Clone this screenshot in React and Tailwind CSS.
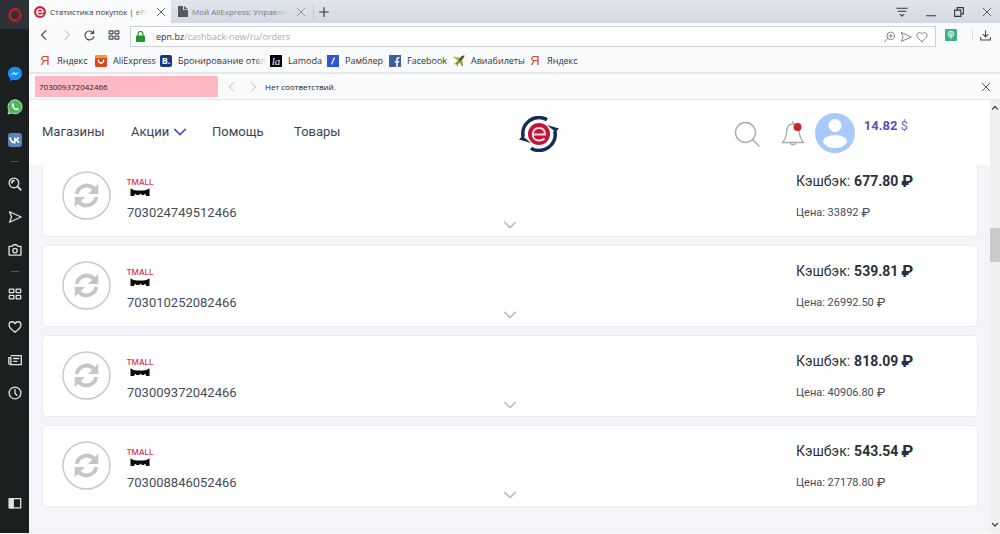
import React from "react";

const orders = [
  { id: "703024749512466", cashback: "677.80", price: "33892" },
  { id: "703010252082466", cashback: "539.81", price: "26992.50" },
  { id: "703009372042466", cashback: "818.09", price: "40906.80" },
  { id: "703008846052466", cashback: "543.54", price: "27178.80" },
];

function Icon({ className, children, box = "0 0 16 16", width = 1.2 }) {
  return (
    <svg
      viewBox={box}
      className={className}
      fill="none"
      stroke="currentColor"
      strokeWidth={width}
      strokeLinecap="round"
      strokeLinejoin="round"
      aria-hidden="true"
    >
      {children}
    </svg>
  );
}

const CloseGlyph = ({ className }) => (
  <Icon className={className}>
    <path d="M2 2 14 14M14 2 2 14" />
  </Icon>
);

const GridGlyph = ({ className }) => (
  <Icon className={className} width={1.5}>
    <rect x="1.5" y="2.5" width="5.2" height="4" rx=".5" />
    <rect x="9.3" y="2.5" width="5.2" height="4" rx=".5" />
    <rect x="1.5" y="9.5" width="5.2" height="4" rx=".5" />
    <rect x="9.3" y="9.5" width="5.2" height="4" rx=".5" />
  </Icon>
);

const HeartGlyph = ({ className, width }) => (
  <Icon className={className} width={width}>
    <path d="M8 14C5 11.500 1.200 9 1.200 5.600 1.200 3.400 2.800 2 4.700 2 6.200 2 7.400 2.900 8 4.200 8.600 2.900 9.800 2 11.300 2c1.900 0 3.500 1.400 3.500 3.600C14.800 9 11 11.500 8 14Z" />
  </Icon>
);

const SendGlyph = ({ className, width }) => (
  <Icon className={className} width={width}>
    <path d="M1.800 2 15 8 1.800 14 4 8Z" />
  </Icon>
);

const YandexGlyph = () => (
  <span className="w-3 text-center font-['Liberation_Sans'] text-[13px] leading-3 text-[#e0452f]" aria-hidden="true">
    Я
  </span>
);

function EpnBadge({ className }) {
  return (
    <svg viewBox="0 0 12 12" className={className} aria-hidden="true">
      <circle cx="6" cy="6" r="6" fill="#cf2440" />
      <path d="M2.500 6.200H9C9 4 7.800 2.800 6 2.800S2.800 4.200 2.800 6.100 4.200 9.300 6.200 9.300c1.200 0 2-.4 2.600-1" fill="none" stroke="#fff" strokeWidth="1.300" />
    </svg>
  );
}

function SideButton({ label, className, children }) {
  return (
    <button type="button" aria-label={label} className={`flex w-full shrink-0 items-center justify-center ${className}`}>
      {children}
    </button>
  );
}

function Sidebar() {
  return (
    <aside className="flex w-[29px] shrink-0 flex-col bg-[#1b1f1f] text-[#e1e3e3]">
      <SideButton label="Opera" className="h-[29px] bg-[#2c3236]">
        <svg viewBox="0 0 14 14" className="size-3.5" aria-hidden="true">
          <ellipse cx="7" cy="7" rx="5.300" ry="5.700" fill="none" stroke="#c8202f" strokeWidth="2.400" />
          <path d="M8 1.500c5 .5 6 10 0 11 2-1.500 2.600-3.500 2.600-5.500S10 3 8 1.500Z" fill="#8c1422" />
        </svg>
      </SideButton>
      <div className="h-7 shrink-0" />
      <SideButton label="Messenger" className="h-[33px]">
        <svg viewBox="0 0 16 16" className="size-4" aria-hidden="true">
          <path d="M8 .8C3.900.8 1 3.700 1 7.400c0 2 .8 3.700 2.200 4.900v2.900l2.500-1.400c.7.200 1.500.3 2.300.3 4.100 0 7-2.900 7-6.700S12.100.8 8 .8Z" fill="#1690f5" />
          <path d="m3.800 9.200 3-3.200 1.800 1.600 3.400-1.900-3.200 3.500L7 7.700Z" fill="#fff" />
        </svg>
      </SideButton>
      <SideButton label="WhatsApp" className="h-[33px]">
        <svg viewBox="0 0 16 16" className="size-4" aria-hidden="true">
          <path d="M1 15 2 11.300A7 7 0 1 1 4.800 14Z" fill="#4bb858" stroke="#e3f5e4" strokeWidth=".8" />
          <path d="M5.700 4.200c-1.200.6-1.300 2-.5 3.500.9 1.700 2.300 2.900 4 3.500 1.400.5 2.600-.5 2.500-1.600L10 8.700l-.9 1c-1.200-.5-2.100-1.400-2.700-2.600l.8-.9-.7-1.900Z" fill="#fff" />
        </svg>
      </SideButton>
      <SideButton label="ВКонтакте" className="h-[33px]">
        <svg viewBox="0 0 14 14" className="size-3.5" aria-hidden="true">
          <rect width="14" height="14" rx="3" fill="#5a84b5" />
          <path d="M2 4.500c.6 3.400 2.200 5.200 4.800 5.200V4.500M7 7c1.600-.2 2.800-1 3.600-2.500M7.300 7c1.800.2 3 1.200 3.900 2.700" fill="none" stroke="#fff" strokeWidth="1.600" />
        </svg>
      </SideButton>
      <div className="mx-auto my-[5px] h-px w-2 shrink-0 bg-[#50575a]" />
      <SideButton label="Поиск" className="h-[33px]">
        <Icon className="size-3.5" width={1.5}>
          <circle cx="6.800" cy="6.800" r="5.500" />
          <path d="m11 11 3.600 3.600M4.500 6.500A2.300 2.300 0 0 1 6.800 4.200" strokeWidth="2" />
        </Icon>
      </SideButton>
      <SideButton label="Отправить" className="h-[33px]">
        <SendGlyph className="size-3.5" width={1.5} />
      </SideButton>
      <SideButton label="Снимок" className="h-[33px]">
        <Icon className="size-3.5" width={1.5}>
          <path d="M1.200 3.800h3.600L6 2h4l1.200 1.800h3.600v10H1.200Z" />
          <circle cx="8" cy="8.700" r="2.500" />
        </Icon>
      </SideButton>
      <div className="mx-auto my-[5px] h-px w-2 shrink-0 bg-[#50575a]" />
      <SideButton label="Экспресс-панель" className="h-[33px]">
        <GridGlyph className="size-3.5" />
      </SideButton>
      <SideButton label="Закладки" className="h-[33px]">
        <HeartGlyph className="size-3.5" width={1.5} />
      </SideButton>
      <SideButton label="Новости" className="h-[33px]">
        <Icon className="size-3.5" width={1.5}>
          <path d="M3.500 3h11.700v10.300H2.300L.9 12V5.300h2.400V13M6.300 6.300h6M6.300 9.500h4" />
        </Icon>
      </SideButton>
      <SideButton label="История" className="h-[33px]">
        <Icon className="size-3.5" width={1.5}>
          <circle cx="8" cy="8" r="6.700" />
          <path d="M8 4v4.300l2.300 2.300" />
        </Icon>
      </SideButton>
      <SideButton label="Боковая панель" className="mt-auto mb-[14px] h-[33px]">
        <Icon className="size-3.5" width={1.5}>
          <rect x="1.500" y="3" width="13" height="10.500" />
          <path d="M1.500 3H6v10.500H1.500Z" fill="currentColor" />
        </Icon>
      </SideButton>
    </aside>
  );
}

function TabBar() {
  return (
    <div className="flex h-[23px] items-stretch bg-linear-to-b from-[#e1e5ee] to-[#d3d8e2] text-[8px] text-[#333]">
      <div className="flex w-[142px] items-center gap-1 bg-[#fafbfd] px-[5px]">
        <EpnBadge className="size-3 shrink-0" />
        <span className="relative min-w-0 flex-1 overflow-hidden whitespace-nowrap">
          Статистика покупок | ePN
          <span className="absolute inset-y-0 right-0 w-4 bg-linear-to-r from-transparent to-[#fafbfd]" />
        </span>
        <button type="button" aria-label="Закрыть вкладку" className="ml-1">
          <CloseGlyph className="size-2.5" />
        </button>
      </div>
      <div className="flex w-[142px] items-center gap-1 px-[7px] text-[#777c85]">
        <svg viewBox="0 0 10 11" className="h-[11px] w-2.5 shrink-0" aria-hidden="true">
          <path d="M0 0h5v4h5v7H0ZM6 0l4 3.200H6Z" fill="#555a60" />
        </svg>
        <span className="relative min-w-0 flex-1 overflow-hidden whitespace-nowrap">
          Мой AliExpress: Управлят
          <span className="absolute inset-y-0 right-0 w-4 bg-linear-to-r from-transparent to-[#dadfe8]" />
        </span>
        <button type="button" aria-label="Закрыть вкладку" className="ml-1">
          <CloseGlyph className="size-2.5" />
        </button>
      </div>
      <button type="button" aria-label="Новая вкладка" className="my-1 flex w-[24px] items-center justify-center border-l border-[#c0c5ce] pr-1">
        <Icon className="size-2.5" width={1.8}>
          <path d="M8 1v14M1 8h14" />
        </Icon>
      </button>
      <div className="ml-auto flex items-center gap-[18px] pr-2">
        <button type="button" aria-label="Меню вкладок">
          <Icon className="size-3" width={1.4}>
            <path d="M1 3h14M3 7h10M5.500 11 8 13.500l2.500-2.500" />
          </Icon>
        </button>
        <button type="button" aria-label="Свернуть">
          <Icon className="size-2.5" width={1.8}>
            <path d="M1 14h14" />
          </Icon>
        </button>
        <button type="button" aria-label="Развернуть">
          <Icon className="size-2.5" width={1.7}>
            <path d="M1 5h10v10H1ZM5 5V1h10v10h-4" />
          </Icon>
        </button>
        <button type="button" aria-label="Закрыть окно">
          <CloseGlyph className="size-2.5" />
        </button>
      </div>
    </div>
  );
}

function AddressBar() {
  return (
    <div className="flex h-6 items-center text-[#44494d]">
      <div className="flex w-[101px] items-center justify-between pr-[10px] pl-[10px]">
        <button type="button" aria-label="Назад">
          <Icon className="size-2.5" width={1.8}><path d="M11 1 4 8l7 7" /></Icon>
        </button>
        <button type="button" aria-label="Вперёд" className="text-[#c5c9cc]">
          <Icon className="size-2.5" width={1.8}><path d="m5 1 7 7-7 7" /></Icon>
        </button>
        <button type="button" aria-label="Обновить">
          <Icon className="size-[11px]" width={1.7}><path d="M13.500 4.500A6.500 6.500 0 1 0 14.300 9.500M14 1v4h-4" /></Icon>
        </button>
        <button type="button" aria-label="Экспресс-панель">
          <GridGlyph className="size-3" />
        </button>
      </div>
      <div className="mt-[3px] flex h-[21px] min-w-0 flex-1 items-center border border-[#cdd1d3] bg-white pr-[7px] pl-[5px]">
        <svg viewBox="0 0 9 11" className="h-[11px] w-[9px]" aria-hidden="true">
          <rect y="4.500" width="9" height="6.500" rx=".8" fill="#21992a" />
          <path d="M2 5V3a2.500 2.500 0 0 1 5 0v2" fill="none" stroke="#21992a" strokeWidth="1.200" />
        </svg>
        <div className="ml-2 flex h-3 flex-1 items-center border-l border-[#e8e8e8] pl-0.5 text-[9px] text-[#aaadaf]">
          <span className="text-[#2c3033]">epn.bz</span>/cashback-new/ru/orders
        </div>
        <div className="flex items-center gap-1 text-[#777]">
          <button type="button" aria-label="Масштаб">
            <Icon className="size-3" width={1.2}>
              <circle cx="9" cy="6.500" r="5" />
              <path d="m5 10-4 4M9 4.300v4.400M6.800 6.500h4.400" />
            </Icon>
          </button>
          <button type="button" aria-label="Отправить"><SendGlyph className="size-3" /></button>
          <button type="button" aria-label="В закладки"><HeartGlyph className="size-3" width={1.2} /></button>
        </div>
      </div>
      <div className="flex w-16 items-center justify-between pr-[9px] pl-[9px]">
        <button type="button" aria-label="Расширение">
          <svg viewBox="0 0 12 12" className="size-3" aria-hidden="true">
            <rect width="12" height="12" rx="1" fill="#3fae88" />
            <circle cx="6" cy="5" r="3" fill="#8fd5bb" stroke="#d5f1e6" strokeWidth=".8" />
            <path d="M6 5v5" stroke="#d5f1e6" />
          </svg>
        </button>
        <span className="ml-2 h-3 w-px bg-[#d9dcdf]" />
        <button type="button" aria-label="Загрузки">
          <Icon className="size-[11px]" width={1.6}><path d="M8 1v9M4.500 6.500 8 10l3.500-3.500M1 11v3.500h14V11" /></Icon>
        </button>
      </div>
    </div>
  );
}

const bookmarks = [
  { label: "Яндекс", icon: <YandexGlyph /> },
  {
    label: "AliExpress",
    icon: (
      <svg viewBox="0 0 12 12" className="size-3 shrink-0" aria-hidden="true">
        <rect width="12" height="12" rx="1.500" fill="#d8481c" />
        <path d="M0 1.500Q0 0 1.500 0h9Q12 0 12 1.500V3H0Z" fill="#f0a030" />
        <path d="M3.300 5c.2 4 5.200 4 5.400 0" fill="none" stroke="#fff" strokeWidth="1.300" strokeLinecap="round" />
      </svg>
    ),
  },
  {
    label: "Бронирование отел",
    icon: <span className="size-3 shrink-0 rounded-[2px] bg-[#173a7d] text-center text-[9px] leading-3 font-bold text-white" aria-hidden="true">B.</span>,
  },
  {
    label: "Lamoda",
    icon: <span className="size-3 shrink-0 bg-black text-center font-['Liberation_Serif'] text-[11px] leading-3 text-white italic" aria-hidden="true">la</span>,
  },
  {
    label: "Рамблер",
    icon: (
      <svg viewBox="0 0 12 12" className="size-3 shrink-0" aria-hidden="true">
        <rect width="12" height="12" fill="#2f55d4" />
        <path d="M7.500 2.500 4.500 9.500" stroke="#fff" strokeWidth="1.200" />
      </svg>
    ),
  },
  {
    label: "Facebook",
    icon: (
      <svg viewBox="0 0 12 12" className="size-3 shrink-0" aria-hidden="true">
        <rect width="12" height="12" fill="#3f5f9e" />
        <path d="M8 12V6.500M10.500 2.800C8.800 2.500 8 3.300 8 4.700v2M5.800 6.800h4.400" fill="none" stroke="#fff" strokeWidth="1.600" />
      </svg>
    ),
  },
  {
    label: "Авиабилеты",
    icon: (
      <svg viewBox="0 0 12 12" className="size-3 shrink-0" aria-hidden="true">
        <path d="M11.500.5 9 1 7 3.200 1 1.500l-.5 1L4.800 5.500 2.800 7.800.5 8l3 1 1 2.500.6-2.200L7 7.500l2 4 1-.6L9 5l2-2Z" fill="#7f9b31" />
        <path d="m1 1.500 5 3.200L4.800 5.500.5 2.500ZM.5 8l3 1 1 2.500-1.200-.8Z" fill="#e8c436" />
        <path d="M11.500.5 9 1 6 4.200 7 6Z" fill="#314525" />
      </svg>
    ),
  },
  { label: "Яндекс", icon: <YandexGlyph /> },
];

function Bookmarks() {
  return (
    <nav
      aria-label="Закладки"
      className="grid h-[27px] grid-cols-[56px_65px_110px_57px_62px_64px_76px_60px] items-center border-b-2 border-[#e4e6e8] pt-[3px] pl-[10px] text-[9px] text-[#333]"
    >
      {bookmarks.map((b, i) => (
        <a key={i} href="#" className="flex min-w-0 items-center gap-1.5 whitespace-nowrap">
          {b.icon}
          <span className="relative">
            {b.label}
            {i === 2 && <span className="absolute inset-y-0 right-0 w-3 bg-linear-to-r from-transparent to-[#f9fafc]" />}
          </span>
        </a>
      ))}
    </nav>
  );
}

function FindBar() {
  return (
    <div className="flex h-[26px] items-center border-b border-[#e6e7e9] pr-[9px] pl-1.5 text-[8px] text-[#222]">
      <input
        aria-label="Найти на странице"
        defaultValue="703009372042466"
        className="h-[21px] w-[183px] bg-[#ffb9c2] px-1 outline-none"
      />
      <div className="flex w-[47px] items-center gap-[11px] pl-[9px] text-[#b9bdc0]">
        <button type="button" aria-label="Предыдущее"><Icon className="size-2.5" width={1.6}><path d="M11 1 4 8l7 7" /></Icon></button>
        <button type="button" aria-label="Следующее"><Icon className="size-2.5" width={1.6}><path d="m5 1 7 7-7 7" /></Icon></button>
      </div>
      <span>Нет соответствий.</span>
      <button type="button" aria-label="Закрыть поиск" className="ml-auto">
        <CloseGlyph className="size-2.5" />
      </button>
    </div>
  );
}

function EpnLogo() {
  return (
    <svg viewBox="0 0 40 36" className="h-9 w-10" aria-hidden="true">
      <g fill="none" stroke="#142c58" strokeWidth="3.600">
        <path d="M28 3.800A16 16 0 0 0 4.200 21" />
        <path d="M12 32.200A16 16 0 0 0 35.800 15" />
      </g>
      <path d="M28 9 40 12.500 36.500 16Z" fill="#142c58" />
      <path d="M12 27 0 23.500 3.500 20Z" fill="#142c58" />
      <circle cx="20" cy="18" r="11" fill="#c41436" />
      <path d="M13.500 18.500H26C26 14.500 23.700 12 20 12s-6.300 2.500-6.300 6.200S16.300 24.500 20 24.500c2.500 0 4.300-.7 5.500-2" fill="none" stroke="#f8dfe4" strokeWidth="2" />
    </svg>
  );
}

function SiteHeader() {
  return (
    <header className="relative z-10 grid h-[65px] shrink-0 grid-cols-[490px_40px_1fr] bg-white font-[Roboto,sans-serif] text-[13px] text-[#3d4450]">
      <nav aria-label="Главное меню" className="grid grid-cols-[89px_81px_82px_auto] content-start pt-[22px] pl-[13px] leading-5">
        <a href="#">Магазины</a>
        <a href="#" className="flex items-center gap-1">
          Акции
          <Icon className="size-3.5 text-[#5a52c4]" width={2}><path d="m2 5 6 6 6-6" /></Icon>
        </a>
        <a href="#">Помощь</a>
        <a href="#">Товары</a>
      </nav>
      <a href="#" aria-label="ePN" className="pt-4"><EpnLogo /></a>
      <div className="flex items-start justify-end pr-[82px]">
        <button type="button" aria-label="Поиск" className="mt-[21px] text-[#a9abad]">
          <Icon className="size-[26px]" box="0 0 26 26" width={1.4}>
            <circle cx="11.500" cy="11.500" r="10" />
            <path d="m19 19 6 6" />
          </Icon>
        </button>
        <button type="button" aria-label="Уведомления" className="mt-5 ml-[21px] text-[#a9abad]">
          <svg viewBox="0 0 24 26" className="h-[26px] w-6" fill="none" stroke="currentColor" strokeWidth="1.300" aria-hidden="true">
            <path d="M12 1v3M12 4C7.500 4 6 7 5.800 11 5.600 16 4 19.500 1.500 22.500h21C20 19.500 18.400 16 18.200 11 18 7 16.500 4 12 4ZM9.500 22.500c0 3 5 3 5 0" />
            <circle cx="16.500" cy="7" r="4" fill="#d31f26" stroke="none" />
          </svg>
        </button>
        <button type="button" aria-label="Профиль" className="mt-[13px] ml-[10px]">
          <svg viewBox="0 0 40 40" className="size-10" aria-hidden="true">
            <circle cx="20" cy="20" r="20" fill="#aac9fb" />
            <circle cx="20" cy="12.500" r="6.500" fill="#fff" />
            <path d="M8 28.500C9 24 14 22.300 20 22.300S31 24 32 28.500C30 33 26 35 20 35S10 33 8 28.500Z" fill="#fff" />
          </svg>
        </button>
        <p className="mt-4 ml-[9px] leading-5 whitespace-nowrap text-[#6f67cf]">
          <b className="text-[#5650bd]">14.82</b> $
        </p>
      </div>
    </header>
  );
}

function StoreLogo() {
  return (
    <div className="flex w-[26px] flex-col items-center">
      <span className="font-[Inter] text-[8px] leading-2 font-medium text-[#d9304f]">TMALL</span>
      <svg viewBox="0 0 20 8" className="mt-0.5 h-2 w-5" aria-hidden="true">
        <path d="M.5.3 3.500 2C8 2.800 12 2.800 16.500 2L19.500.3V8h-3.300l-1-2.300L13.600 7H11.800L10.800 5.600 9.200 7H6.600L5.200 5.700 3.800 8H.5Z" fill="#0b0b0b" />
      </svg>
    </div>
  );
}

function OrderCard({ order }) {
  return (
    <li className="grid h-[82px] grid-cols-[1fr_auto_1fr] rounded-[5px] border border-[#ebecf1] bg-white">
      <div className="flex">
        <svg viewBox="0 0 50 50" className="mt-[15px] ml-[19px] size-[49px]" aria-label="В обработке" role="img">
          <circle cx="25" cy="25" r="24" fill="none" stroke="#c9c9c9" strokeWidth="1.500" />
          <g fill="none" stroke="#c6c6c6" strokeWidth="4">
            <path d="M15 23.500A10.300 10.300 0 0 1 32.500 18" />
            <path d="M35 26.500A10.300 10.300 0 0 1 17.500 32" />
          </g>
          <path d="M37 13v10.500H26.500ZM13 37V26.500h10.500Z" fill="#c6c6c6" />
        </svg>
        <div className="pt-[22px] pl-4">
          <StoreLogo />
          <p className="mt-[7px] text-[13px] leading-5">{order.id}</p>
        </div>
      </div>
      <button type="button" aria-label="Подробнее" className="mb-1 self-end text-[#bfc1c4]">
        <Icon className="size-3.5" width={2}><path d="m2 5 6 6 6-6" /></Icon>
      </button>
      <div className="ml-auto w-[181px] pt-[15px]">
        <p className="flex gap-1 text-[14px] leading-5 whitespace-nowrap text-[#2b313c]">
          Кэшбэк:
          <b className="flex gap-[3px]">
            {order.cashback} <span className="text-[17px]">₽</span>
          </b>
        </p>
        <p className="mt-3 flex gap-[3px] text-[11px] leading-5">
          Цена: {order.price} <span className="text-[13px]">₽</span>
        </p>
      </div>
    </li>
  );
}

export default function App() {
  return (
    <div className="flex h-screen overflow-hidden bg-[#f9fafc] pb-px font-['Open_Sans',sans-serif]">
      <Sidebar />
      <div className="flex min-w-0 flex-1 flex-col">
        <TabBar />
        <AddressBar />
        <Bookmarks />
        <FindBar />
        <div className="flex min-h-0 flex-1">
          <div className="flex min-w-0 flex-1 flex-col overflow-hidden bg-[#f4f5f9]">
            <SiteHeader />
            <main className="-mt-[10px] pr-3 pl-[13px] font-[Roboto,sans-serif] text-[#454c58]">
              <ul className="flex flex-col gap-2">
                {orders.map((o) => (
                  <OrderCard key={o.id} order={o} />
                ))}
              </ul>
            </main>
          </div>
          <div className="flex w-[10px] shrink-0 flex-col items-center justify-between bg-[#f0f0f0] py-1 text-[#444]">
            <Icon className="size-2" width={2.5}><path d="m3 10 5-5 5 5" /></Icon>
            <div className="mt-[116px] mb-auto h-[34px] w-full bg-[#cacaca]" />
            <Icon className="size-2" width={2.5}><path d="m3 5 5 5 5-5" /></Icon>
          </div>
        </div>
      </div>
    </div>
  );
}
